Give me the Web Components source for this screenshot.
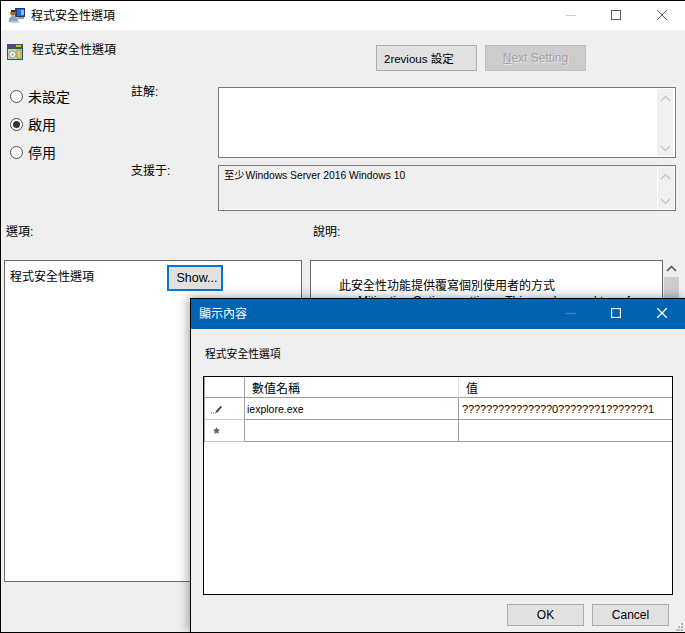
<!DOCTYPE html>
<html lang="zh-Hant">
<head>
<meta charset="utf-8">
<title>程式安全性選項</title>
<style>
  html, body { margin: 0; padding: 0; background: #efefef; }
  body { font: 12px "Liberation Sans", "Noto Sans CJK TC", sans-serif; color: #000; width: 685px; height: 633px; overflow: hidden; }
</style>
</head>
<body>
<policy-window>
  <title-bar slot="title" label="程式安全性選項">
    <svg slot="icon" width="16" height="16" viewBox="0 0 16 16">
      <rect x="6" y="1" width="10" height="9" fill="#26346e"/>
      <rect x="8" y="2" width="7" height="7" fill="#1f6fe0"/>
      <rect x="12" y="3" width="3" height="5" fill="#8cc0f5"/>
      <rect x="9" y="10" width="6" height="2" fill="#9a9a9a"/>
      <circle cx="4" cy="6" r="2.8" fill="#a8682c"/>
      <rect x="2" y="3" width="4" height="2" fill="#3a2a20"/>
      <path d="M0 15v-2.500c0-2 2-3.500 4-3.500s5 1.500 5 3.500v2.500z" fill="#8aa2c4"/>
      <rect x="2" y="14" width="8" height="2" fill="#c4ccd8"/>
    </svg>
  </title-bar>

  <policy-header label="程式安全性選項">
    <svg slot="icon" width="16" height="16" viewBox="0 0 16 16">
      <rect x="0" y="0" width="16" height="16" fill="#1f5f66"/>
      <rect x="1" y="1" width="14" height="3" fill="#5a3f8c"/>
      <rect x="9" y="1" width="5" height="2" fill="#e0b52c"/>
      <rect x="1" y="5" width="14" height="10" fill="#d8cfa8"/>
      <circle cx="5.500" cy="10.500" r="3.500" fill="#f0f0f0" stroke="#7c7c7c" stroke-width=".7"/>
      <circle cx="5.500" cy="10.500" r="1" fill="#6a95b8"/>
      <rect x="10" y="6" width="4" height="8" fill="#efcf5e" stroke="#7a6a2e" stroke-width=".6"/>
    </svg>
    <win-button slot="actions" wide>2revious 設定</win-button>
    <win-button slot="actions" wide disabled><u>N</u>ext Setting</win-button>
  </policy-header>

  <settings-row>
    <radio-option label="未設定"></radio-option>
    <radio-option label="啟用" checked></radio-option>
    <radio-option label="停用"></radio-option>
    <field-label slot="field" style="margin-top:-2px">註解:</field-label>
    <scroll-box slot="field" class="comment" tall></scroll-box>
    <field-label slot="field" style="margin-top:-1px">支援于:</field-label>
    <scroll-box slot="field" readonly><span style="margin-right:-2px">至少</span> Windows Server 2016 Windows 10</scroll-box>
  </settings-row>

  <panel-row>
    <options-panel label="程式安全性選項"></options-panel>
    <help-panel></help-panel>
  </panel-row>

  <content-dialog label="顯示內容" heading="程式安全性選項">
    <value-grid></value-grid>
  </content-dialog>
</policy-window>

<script>
const chevron = (dir, color) => `
  <svg width="11" height="7" viewBox="0 0 11 7" fill="none" stroke="${color}" stroke-width="1.500">
    <path d="${dir === 'up' ? 'M1 6l4.500-4.500L10 6' : 'M1 1l4.500 4.500L10 1'}"/>
  </svg>`;

class TitleBar extends HTMLElement {
  constructor() {
    super();
    this.attachShadow({ mode: 'open' });
  }

  connectedCallback() {
    this.shadowRoot.innerHTML = `
      <style>
        :host { display: flex; align-items: center; box-sizing: border-box; height: 29px; background: #fff; color: #000; font-size: 12px; padding: 0 0 2px 8px; }
        :host([active]) { height: 30px; background: #0063b1; color: #fff; }
        .label { margin-left: 6px; flex: 1; }
        :host([active]) .label { margin-left: 0; padding-bottom: 2px; }
        slot { display: flex; }
        .ctl { width: 46px; display: flex; justify-content: center; align-items: center; }
        svg.c { display: block; stroke: #5f5f5f; fill: none; }
        .min { stroke: #cfcfcf !important; margin-left: 1px; }
        :host([active]) svg.c { stroke: #fff; stroke-width: 1.300; }
        :host([active]) .min { stroke: #3d86c4 !important; }
      </style>
      <slot name="icon"></slot>
      <span class="label">${this.getAttribute('label')}</span>
      <span class="ctl"><svg class="c min" width="10" height="10"><path d="M0 5.500h10"/></svg></span>
      <span class="ctl"><svg class="c" width="10" height="10"><rect x=".5" y=".5" width="9" height="9"/></svg></span>
      <span class="ctl"><svg class="c" width="10" height="10"><path d="M0 0l10 10M10 0L0 10"/></svg></span>
    `;
  }
}

class PolicyWindow extends HTMLElement {
  constructor() {
    super();
    this.attachShadow({ mode: 'open' });
  }

  connectedCallback() {
    this.shadowRoot.innerHTML = `
      <style>
        :host { display: flex; flex-direction: column; position: relative; box-sizing: border-box; width: 685px; height: 633px; overflow: hidden; background: #efefef; border-top: 1px solid #000; border-left: 1px solid #000; border-bottom: 1px solid #000; }
      </style>
      <slot name="title"></slot>
      <slot></slot>
    `;
  }
}

class PolicyHeader extends HTMLElement {
  constructor() {
    super();
    this.attachShadow({ mode: 'open' });
  }

  connectedCallback() {
    this.shadowRoot.innerHTML = `
      <style>
        :host { display: flex; align-items: flex-start; height: 53px; box-sizing: border-box; padding: 14px 99px 0 6px; }
        .name { margin: 0 0 0 9px; line-height: 12px; padding-top: 0; flex: 1; }
        .icon { display: flex; }
        .actions { display: flex; gap: 8px; margin-top: 1px; }
      </style>
      <span class="icon"><slot name="icon"></slot></span>
      <span class="name">${this.getAttribute('label')}</span>
      <span class="actions"><slot name="actions"></slot></span>
    `;
  }
}

class WinButton extends HTMLElement {
  constructor() {
    super();
    this.attachShadow({ mode: 'open' });
  }

  connectedCallback() {
    this.shadowRoot.innerHTML = `
      <style>
        :host { display: inline-flex; align-items: center; justify-content: center; box-sizing: border-box; width: 77px; height: 22px; background: #e1e1e1; border: 1px solid #adadad; font-size: 12px; }
        :host([wide]) { width: 101px; height: 26px; font-size: 11.500px; justify-content: flex-start; padding: 0 0 1px 7px; }
        :host([disabled]) { background: #cccccc; border-color: #bfbfbf; color: #a3a3a3; text-shadow: 1px 1px 0 #e6e6e6; justify-content: center; padding: 0; font-size: 12px; }
        :host([focused]) { width: 56px; height: 26px; border: 2px solid #0078d7; font-size: 12.500px; padding-left: 4px; }
      </style>
      <slot></slot>
    `;
  }
}

class SettingsRow extends HTMLElement {
  constructor() {
    super();
    this.attachShadow({ mode: 'open' });
  }

  connectedCallback() {
    this.shadowRoot.innerHTML = `
      <style>
        :host { display: flex; height: 128px; }
        .radios { width: 130px; box-sizing: border-box; padding-left: 9px; margin-top: -1px; display: flex; flex-direction: column; }
        .fields { display: grid; grid-template-columns: 87px 458px; grid-template-rows: 71px 46px; row-gap: 7px; padding-top: 4px; }
      </style>
      <div class="radios"><slot></slot></div>
      <div class="fields"><slot name="field"></slot></div>
    `;
  }
}

class RadioOption extends HTMLElement {
  constructor() {
    super();
    this.attachShadow({ mode: 'open' });
  }

  connectedCallback() {
    this.shadowRoot.innerHTML = `
      <style>
        :host { display: flex; align-items: center; height: 28px; font-size: 14px; gap: 5px; }
        .dot { width: 13px; height: 13px; box-sizing: border-box; border: 1px solid #4d4d4d; border-radius: 50%; background: #fff; display: flex; align-items: center; justify-content: center; margin-top: 1px; }
        .dot i { width: 7px; height: 7px; border-radius: 50%; background: #333; display: none; }
        :host([checked]) .dot i { display: block; }
      </style>
      <span class="dot"><i></i></span>
      <span>${this.getAttribute('label')}</span>
    `;
  }
}

class FieldLabel extends HTMLElement {
  constructor() {
    super();
    this.attachShadow({ mode: 'open' });
  }

  connectedCallback() {
    this.shadowRoot.innerHTML = `
      <style>
        :host { display: block; font-size: 12px; line-height: 14px; }
      </style>
      <slot></slot>
    `;
  }
}

class ScrollBox extends HTMLElement {
  constructor() {
    super();
    this.attachShadow({ mode: 'open' });
  }

  connectedCallback() {
    this.shadowRoot.innerHTML = `
      <style>
        :host { display: flex; box-sizing: border-box; border: 1px solid #7a7a7a; background: #fff; padding: 1px; }
        :host([readonly]) { background: #efefef; box-shadow: inset -1px -1px 0 #fff; }
        .text { flex: 1; font-size: 10.300px; line-height: 13px; padding: 2px 0 0 4px; }
        .bar { width: 16px; background: #f0f0f0; display: flex; flex-direction: column; align-items: center; justify-content: space-between; padding: 6px 0 4px; box-sizing: border-box; margin-right: 1px; }
        :host([readonly]) .bar { border-left: 1px solid #fff; }
      </style>
      <div class="text"><slot></slot></div>
      <div class="bar">${chevron('up', '#c8c8c8')}${chevron('down', '#c8c8c8')}</div>
    `;
  }
}

class PanelRow extends HTMLElement {
  constructor() {
    super();
    this.attachShadow({ mode: 'open' });
  }

  connectedCallback() {
    this.shadowRoot.innerHTML = `
      <style>
        :host { display: block; }
        .labels { display: flex; height: 49px; box-sizing: border-box; padding: 14px 0 0 5px; line-height: 14px; }
        .labels span:first-child { width: 307px; }
        .panels { display: flex; padding-left: 3px; gap: 8px; height: 322px; }
      </style>
      <div class="labels"><span>選項:</span><span>說明:</span></div>
      <div class="panels"><slot></slot></div>
    `;
  }
}

class OptionsPanel extends HTMLElement {
  constructor() {
    super();
    this.attachShadow({ mode: 'open' });
  }

  connectedCallback() {
    this.shadowRoot.innerHTML = `
      <style>
        :host { display: flex; align-items: flex-start; box-sizing: border-box; width: 298px; height: 322px; background: #fff; border: 1px solid #6b6b6b; padding: 4px 0 0 5px; }
        .name { width: 157px; line-height: 24px; }
      </style>
      <span class="name">${this.getAttribute('label')}</span>
      <win-button focused>Show...</win-button>
    `;
  }
}

class HelpPanel extends HTMLElement {
  constructor() {
    super();
    this.attachShadow({ mode: 'open' });
  }

  connectedCallback() {
    this.shadowRoot.innerHTML = `
      <style>
        :host { display: flex; gap: 1px; }
        .text { box-sizing: border-box; width: 353px; height: 322px; background: #fff; border: 1px solid #6b6b6b; padding: 16px 0 0 28px; overflow: hidden; white-space: nowrap; line-height: 18px; }
        .text div + div { padding-left: 19px; margin-top: -3px; }
        .bar { width: 15px; display: flex; flex-direction: column; align-items: center; padding-top: 5px; gap: 5px; }
        .thumb { width: 15px; height: 100px; background: #cdcdcd; }
      </style>
      <div class="text">
        <div>此安全性功能提供覆寫個別使用者的方式</div>
        <div>Mitigation Options settings. This can be used to enforce</div>
      </div>
      <div class="bar">${chevron('up', '#505050')}<div class="thumb"></div></div>
    `;
  }
}

class ContentDialog extends HTMLElement {
  constructor() {
    super();
    this.attachShadow({ mode: 'open' });
  }

  connectedCallback() {
    this.shadowRoot.innerHTML = `
      <style>
        :host { position: absolute; left: 189px; top: 297px; right: 0; bottom: 0; display: flex; flex-direction: column; background: #efefef; border-top: 1px solid #000; border-left: 1px solid #000; box-shadow: -2px -1px 10px rgba(0, 0, 0, 0.35); }
        .heading { font-size: 10.800px; line-height: 14px; padding: 18px 0 15px 14px; }
        .grid { flex: 1; min-height: 0; margin: 0 12px; display: flex; }
        footer { position: relative; display: flex; justify-content: flex-end; gap: 8px; height: 37px; box-sizing: border-box; padding: 9px 16px 0 0; }
        .grip { position: absolute; right: 1px; bottom: 0; }
      </style>
      <title-bar active label="${this.getAttribute('label')}"></title-bar>
      <div class="heading">${this.getAttribute('heading')}</div>
      <div class="grid"><slot></slot></div>
      <footer>
        <win-button>OK</win-button>
        <win-button>Cancel</win-button>
        <svg class="grip" width="8" height="10" fill="#b4b4b4">
          <rect x="5" y="1" width="2" height="2"/>
          <rect x="2" y="4" width="2" height="2"/><rect x="5" y="4" width="2" height="2"/>
          <rect x="0" y="7" width="2" height="2"/><rect x="2.500" y="7" width="2" height="2"/><rect x="5" y="7" width="2" height="2"/>
        </svg>
      </footer>
    `;
  }
}

class ValueGrid extends HTMLElement {
  constructor() {
    super();
    this.attachShadow({ mode: 'open' });
  }

  connectedCallback() {
    this.shadowRoot.innerHTML = `
      <style>
        :host { display: block; flex: 1; box-sizing: border-box; background: #fff; border: 1px solid #000; }
        .rows { display: grid; grid-template-columns: 41px 214px 1fr; grid-template-rows: 21px 22px 22px; font-size: 10.500px; }
        .rows > div { display: flex; align-items: center; box-sizing: border-box; border-bottom: 1px solid #a0a0a0; border-right: 1px solid #a0a0a0; padding-left: 2px; white-space: nowrap; }
        .rows > div.side { padding-left: 6px; border-left: 1px solid #a0a0a0; border-bottom-color: #c8c8c8; }
        .rows > div:nth-child(3n) { border-right: 0; padding-left: 3px; }
        .rows > div.head { font-size: 12px; padding-left: 7px; }
        .rows > div.head:nth-child(2) { border-right-color: #e0e0e0; }
        .q { font-size: 11px; letter-spacing: -0.120px; }
      </style>
      <div class="rows">
        <div class="side" style="border-bottom-color:#a0a0a0"></div>
        <div class="head">數值名稱</div>
        <div class="head">值</div>
        <div class="side">
          <svg width="12" height="10" viewBox="0 0 12 10">
            <path d="M0 9h1M2 9h1M4 9h1" stroke="#555"/>
            <path d="M6 9l5-6-1.300-1.200-5 5.500z" fill="#444"/>
          </svg>
        </div>
        <div>iexplore.exe</div>
        <div class="q">???????????????0???????1???????1</div>
        <div class="side" style="padding-left:8px">
          <svg width="7" height="7" viewBox="0 0 8 8"><path d="M4 0l1.200 2.600L8 3 6 5l.5 3L4 6.600 1.500 8 2 5 0 3l2.800-.4z" fill="#666"/></svg>
        </div>
        <div></div>
        <div></div>
      </div>
    `;
  }
}

customElements.define('title-bar', TitleBar);
customElements.define('policy-window', PolicyWindow);
customElements.define('policy-header', PolicyHeader);
customElements.define('win-button', WinButton);
customElements.define('settings-row', SettingsRow);
customElements.define('radio-option', RadioOption);
customElements.define('field-label', FieldLabel);
customElements.define('scroll-box', ScrollBox);
customElements.define('panel-row', PanelRow);
customElements.define('options-panel', OptionsPanel);
customElements.define('help-panel', HelpPanel);
customElements.define('content-dialog', ContentDialog);
customElements.define('value-grid', ValueGrid);
</script>
</body>
</html>
